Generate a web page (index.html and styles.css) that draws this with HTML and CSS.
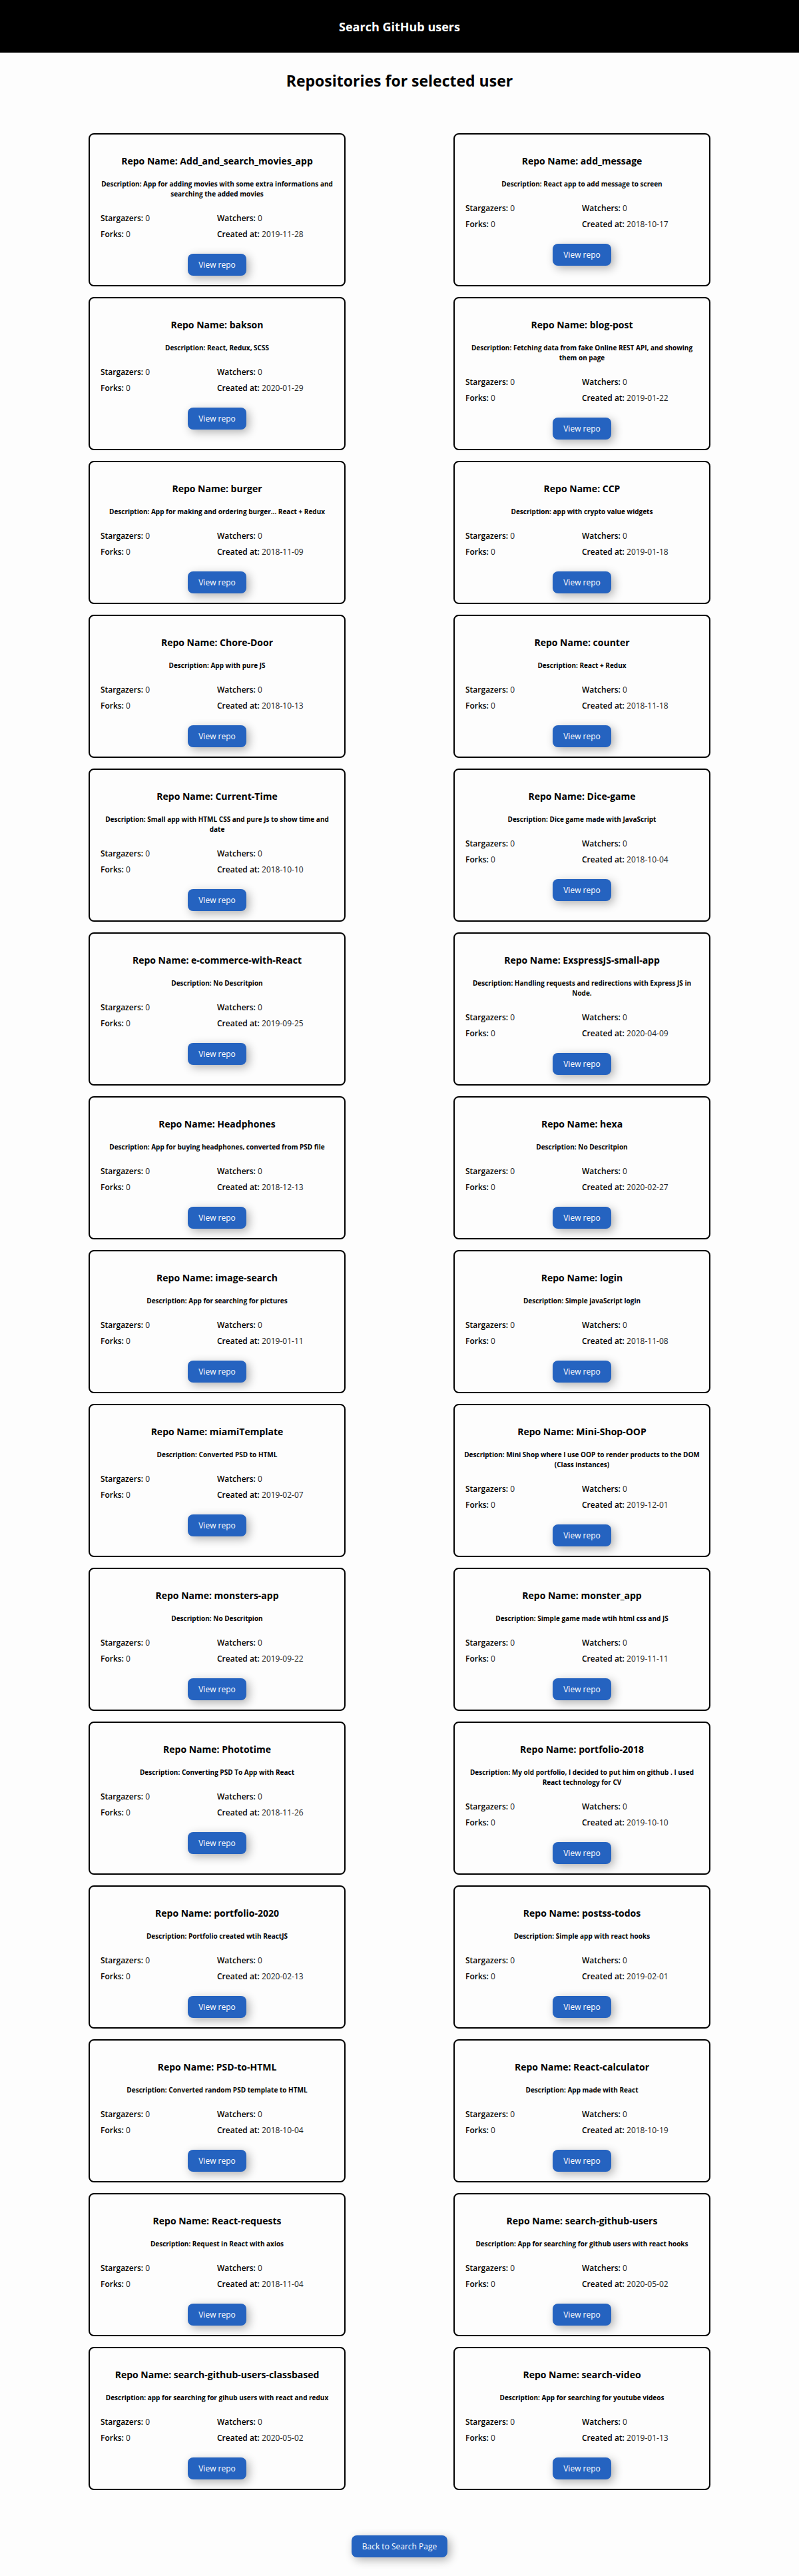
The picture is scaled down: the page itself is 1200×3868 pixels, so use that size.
FILE: index.html
```
<!DOCTYPE html>
<html lang="en">
<head>
<meta charset="utf-8">
<meta name="viewport" content="width=device-width, initial-scale=1">
<title>Search GitHub users</title>
<link rel="stylesheet" href="styles.css">
</head>
<body>
<header class="site-header"><h1 class="site-title">Search GitHub users</h1></header>
<main class="page">
<h2 class="page-title">Repositories for selected user</h2>
<div class="repos">
<article class="repo">
<h3 class="repo-name">Repo Name: Add_and_search_movies_app</h3>
<p class="repo-desc">Description: App for adding movies with some extra informations and searching the added movies</p>
<ul class="stats"><li><b>Stargazers:</b> 0</li><li><b>Watchers:</b> 0</li><li><b>Forks:</b> 0</li><li><b>Created at:</b> 2019-11-28</li></ul>
<a class="btn" href="#">View repo</a>
</article>
<article class="repo">
<h3 class="repo-name">Repo Name: add_message</h3>
<p class="repo-desc">Description: React app to add message to screen</p>
<ul class="stats"><li><b>Stargazers:</b> 0</li><li><b>Watchers:</b> 0</li><li><b>Forks:</b> 0</li><li><b>Created at:</b> 2018-10-17</li></ul>
<a class="btn" href="#">View repo</a>
</article>
<article class="repo">
<h3 class="repo-name">Repo Name: bakson</h3>
<p class="repo-desc">Description: React, Redux, SCSS</p>
<ul class="stats"><li><b>Stargazers:</b> 0</li><li><b>Watchers:</b> 0</li><li><b>Forks:</b> 0</li><li><b>Created at:</b> 2020-01-29</li></ul>
<a class="btn" href="#">View repo</a>
</article>
<article class="repo">
<h3 class="repo-name">Repo Name: blog-post</h3>
<p class="repo-desc">Description: Fetching data from fake Online REST API, and showing them on page</p>
<ul class="stats"><li><b>Stargazers:</b> 0</li><li><b>Watchers:</b> 0</li><li><b>Forks:</b> 0</li><li><b>Created at:</b> 2019-01-22</li></ul>
<a class="btn" href="#">View repo</a>
</article>
<article class="repo">
<h3 class="repo-name">Repo Name: burger</h3>
<p class="repo-desc">Description: App for making and ordering burger... React + Redux</p>
<ul class="stats"><li><b>Stargazers:</b> 0</li><li><b>Watchers:</b> 0</li><li><b>Forks:</b> 0</li><li><b>Created at:</b> 2018-11-09</li></ul>
<a class="btn" href="#">View repo</a>
</article>
<article class="repo">
<h3 class="repo-name">Repo Name: CCP</h3>
<p class="repo-desc">Description: app with crypto value widgets</p>
<ul class="stats"><li><b>Stargazers:</b> 0</li><li><b>Watchers:</b> 0</li><li><b>Forks:</b> 0</li><li><b>Created at:</b> 2019-01-18</li></ul>
<a class="btn" href="#">View repo</a>
</article>
<article class="repo">
<h3 class="repo-name">Repo Name: Chore-Door</h3>
<p class="repo-desc">Description: App with pure JS</p>
<ul class="stats"><li><b>Stargazers:</b> 0</li><li><b>Watchers:</b> 0</li><li><b>Forks:</b> 0</li><li><b>Created at:</b> 2018-10-13</li></ul>
<a class="btn" href="#">View repo</a>
</article>
<article class="repo">
<h3 class="repo-name">Repo Name: counter</h3>
<p class="repo-desc">Description: React + Redux</p>
<ul class="stats"><li><b>Stargazers:</b> 0</li><li><b>Watchers:</b> 0</li><li><b>Forks:</b> 0</li><li><b>Created at:</b> 2018-11-18</li></ul>
<a class="btn" href="#">View repo</a>
</article>
<article class="repo">
<h3 class="repo-name">Repo Name: Current-Time</h3>
<p class="repo-desc">Description: Small app with HTML CSS and pure Js to show time and date</p>
<ul class="stats"><li><b>Stargazers:</b> 0</li><li><b>Watchers:</b> 0</li><li><b>Forks:</b> 0</li><li><b>Created at:</b> 2018-10-10</li></ul>
<a class="btn" href="#">View repo</a>
</article>
<article class="repo">
<h3 class="repo-name">Repo Name: Dice-game</h3>
<p class="repo-desc">Description: Dice game made with JavaScript</p>
<ul class="stats"><li><b>Stargazers:</b> 0</li><li><b>Watchers:</b> 0</li><li><b>Forks:</b> 0</li><li><b>Created at:</b> 2018-10-04</li></ul>
<a class="btn" href="#">View repo</a>
</article>
<article class="repo">
<h3 class="repo-name">Repo Name: e-commerce-with-React</h3>
<p class="repo-desc">Description: No Descritpion</p>
<ul class="stats"><li><b>Stargazers:</b> 0</li><li><b>Watchers:</b> 0</li><li><b>Forks:</b> 0</li><li><b>Created at:</b> 2019-09-25</li></ul>
<a class="btn" href="#">View repo</a>
</article>
<article class="repo">
<h3 class="repo-name">Repo Name: ExspressJS-small-app</h3>
<p class="repo-desc">Description: Handling requests and redirections with Express JS in Node.</p>
<ul class="stats"><li><b>Stargazers:</b> 0</li><li><b>Watchers:</b> 0</li><li><b>Forks:</b> 0</li><li><b>Created at:</b> 2020-04-09</li></ul>
<a class="btn" href="#">View repo</a>
</article>
<article class="repo">
<h3 class="repo-name">Repo Name: Headphones</h3>
<p class="repo-desc">Description: App for buying headphones, converted from PSD file</p>
<ul class="stats"><li><b>Stargazers:</b> 0</li><li><b>Watchers:</b> 0</li><li><b>Forks:</b> 0</li><li><b>Created at:</b> 2018-12-13</li></ul>
<a class="btn" href="#">View repo</a>
</article>
<article class="repo">
<h3 class="repo-name">Repo Name: hexa</h3>
<p class="repo-desc">Description: No Descritpion</p>
<ul class="stats"><li><b>Stargazers:</b> 0</li><li><b>Watchers:</b> 0</li><li><b>Forks:</b> 0</li><li><b>Created at:</b> 2020-02-27</li></ul>
<a class="btn" href="#">View repo</a>
</article>
<article class="repo">
<h3 class="repo-name">Repo Name: image-search</h3>
<p class="repo-desc">Description: App for searching for pictures</p>
<ul class="stats"><li><b>Stargazers:</b> 0</li><li><b>Watchers:</b> 0</li><li><b>Forks:</b> 0</li><li><b>Created at:</b> 2019-01-11</li></ul>
<a class="btn" href="#">View repo</a>
</article>
<article class="repo">
<h3 class="repo-name">Repo Name: login</h3>
<p class="repo-desc">Description: Simple javaScript login</p>
<ul class="stats"><li><b>Stargazers:</b> 0</li><li><b>Watchers:</b> 0</li><li><b>Forks:</b> 0</li><li><b>Created at:</b> 2018-11-08</li></ul>
<a class="btn" href="#">View repo</a>
</article>
<article class="repo">
<h3 class="repo-name">Repo Name: miamiTemplate</h3>
<p class="repo-desc">Description: Converted PSD to HTML</p>
<ul class="stats"><li><b>Stargazers:</b> 0</li><li><b>Watchers:</b> 0</li><li><b>Forks:</b> 0</li><li><b>Created at:</b> 2019-02-07</li></ul>
<a class="btn" href="#">View repo</a>
</article>
<article class="repo">
<h3 class="repo-name">Repo Name: Mini-Shop-OOP</h3>
<p class="repo-desc">Description: Mini Shop where I use OOP to render products to the DOM (Class instances)</p>
<ul class="stats"><li><b>Stargazers:</b> 0</li><li><b>Watchers:</b> 0</li><li><b>Forks:</b> 0</li><li><b>Created at:</b> 2019-12-01</li></ul>
<a class="btn" href="#">View repo</a>
</article>
<article class="repo">
<h3 class="repo-name">Repo Name: monsters-app</h3>
<p class="repo-desc">Description: No Descritpion</p>
<ul class="stats"><li><b>Stargazers:</b> 0</li><li><b>Watchers:</b> 0</li><li><b>Forks:</b> 0</li><li><b>Created at:</b> 2019-09-22</li></ul>
<a class="btn" href="#">View repo</a>
</article>
<article class="repo">
<h3 class="repo-name">Repo Name: monster_app</h3>
<p class="repo-desc">Description: Simple game made wtih html css and JS</p>
<ul class="stats"><li><b>Stargazers:</b> 0</li><li><b>Watchers:</b> 0</li><li><b>Forks:</b> 0</li><li><b>Created at:</b> 2019-11-11</li></ul>
<a class="btn" href="#">View repo</a>
</article>
<article class="repo">
<h3 class="repo-name">Repo Name: Phototime</h3>
<p class="repo-desc">Description: Converting PSD To App with React</p>
<ul class="stats"><li><b>Stargazers:</b> 0</li><li><b>Watchers:</b> 0</li><li><b>Forks:</b> 0</li><li><b>Created at:</b> 2018-11-26</li></ul>
<a class="btn" href="#">View repo</a>
</article>
<article class="repo">
<h3 class="repo-name">Repo Name: portfolio-2018</h3>
<p class="repo-desc">Description: My old portfolio, I decided to put him on github . I used React technology for CV</p>
<ul class="stats"><li><b>Stargazers:</b> 0</li><li><b>Watchers:</b> 0</li><li><b>Forks:</b> 0</li><li><b>Created at:</b> 2019-10-10</li></ul>
<a class="btn" href="#">View repo</a>
</article>
<article class="repo">
<h3 class="repo-name">Repo Name: portfolio-2020</h3>
<p class="repo-desc">Description: Portfolio created wtih ReactJS</p>
<ul class="stats"><li><b>Stargazers:</b> 0</li><li><b>Watchers:</b> 0</li><li><b>Forks:</b> 0</li><li><b>Created at:</b> 2020-02-13</li></ul>
<a class="btn" href="#">View repo</a>
</article>
<article class="repo">
<h3 class="repo-name">Repo Name: postss-todos</h3>
<p class="repo-desc">Description: Simple app with react hooks</p>
<ul class="stats"><li><b>Stargazers:</b> 0</li><li><b>Watchers:</b> 0</li><li><b>Forks:</b> 0</li><li><b>Created at:</b> 2019-02-01</li></ul>
<a class="btn" href="#">View repo</a>
</article>
<article class="repo">
<h3 class="repo-name">Repo Name: PSD-to-HTML</h3>
<p class="repo-desc">Description: Converted random PSD template to HTML</p>
<ul class="stats"><li><b>Stargazers:</b> 0</li><li><b>Watchers:</b> 0</li><li><b>Forks:</b> 0</li><li><b>Created at:</b> 2018-10-04</li></ul>
<a class="btn" href="#">View repo</a>
</article>
<article class="repo">
<h3 class="repo-name">Repo Name: React-calculator</h3>
<p class="repo-desc">Description: App made with React</p>
<ul class="stats"><li><b>Stargazers:</b> 0</li><li><b>Watchers:</b> 0</li><li><b>Forks:</b> 0</li><li><b>Created at:</b> 2018-10-19</li></ul>
<a class="btn" href="#">View repo</a>
</article>
<article class="repo">
<h3 class="repo-name">Repo Name: React-requests</h3>
<p class="repo-desc">Description: Request in React with axios</p>
<ul class="stats"><li><b>Stargazers:</b> 0</li><li><b>Watchers:</b> 0</li><li><b>Forks:</b> 0</li><li><b>Created at:</b> 2018-11-04</li></ul>
<a class="btn" href="#">View repo</a>
</article>
<article class="repo">
<h3 class="repo-name">Repo Name: search-github-users</h3>
<p class="repo-desc">Description: App for searching for github users with react hooks</p>
<ul class="stats"><li><b>Stargazers:</b> 0</li><li><b>Watchers:</b> 0</li><li><b>Forks:</b> 0</li><li><b>Created at:</b> 2020-05-02</li></ul>
<a class="btn" href="#">View repo</a>
</article>
<article class="repo">
<h3 class="repo-name">Repo Name: search-github-users-classbased</h3>
<p class="repo-desc">Description: app for searching for gihub users with react and redux</p>
<ul class="stats"><li><b>Stargazers:</b> 0</li><li><b>Watchers:</b> 0</li><li><b>Forks:</b> 0</li><li><b>Created at:</b> 2020-05-02</li></ul>
<a class="btn" href="#">View repo</a>
</article>
<article class="repo">
<h3 class="repo-name">Repo Name: search-video</h3>
<p class="repo-desc">Description: App for searching for youtube videos</p>
<ul class="stats"><li><b>Stargazers:</b> 0</li><li><b>Watchers:</b> 0</li><li><b>Forks:</b> 0</li><li><b>Created at:</b> 2019-01-13</li></ul>
<a class="btn" href="#">View repo</a>
</article>
</div>
<a class="btn" href="#">Back to Search Page</a>
</main>
</body>
</html>
```
FILE: styles.css
```
* {
  box-sizing: border-box;
  margin: 0;
  padding: 0;
}

body {
  background: #fdfdfd;
  color: #000;
  font-family: "Open Sans", "Noto Sans", sans-serif;
  font-size: 12px;
  line-height: 16px;
}

.site-header {
  padding: 28px 16px 27px;
  background: #000;
  color: #fff;
  text-align: center;
}

.site-title {
  font-size: 18px;
  font-weight: 700;
  line-height: 24px;
}

.page {
  display: flex;
  flex-direction: column;
  align-items: center;
  padding: 26px 133px 28px;
}

.page-title {
  font-size: 23px;
  font-weight: 700;
  line-height: 32px;
}

.repos {
  display: grid;
  grid-template-columns: 1fr 1fr;
  gap: 16px 162px;
  width: 100%;
  margin: 63px 0 68px;
}

.repo {
  display: flex;
  flex-direction: column;
  align-items: center;
  padding: 30px 14px 14px;
  border: 2px solid #000;
  border-radius: 8px;
}

.repo-name {
  font-size: 14px;
  font-weight: 700;
  line-height: 20px;
  text-align: center;
}

.repo-desc {
  margin: 17px 0 21px;
  font-size: 10px;
  font-weight: 700;
  line-height: 15px;
  text-align: center;
}

.stats {
  display: grid;
  grid-template-columns: 1fr 1fr;
  row-gap: 8px;
  width: 100%;
  margin-bottom: 21px;
  padding: 0 2px;
  list-style: none;
  color: #222;
}

.stats b {
  color: #000;
  font-weight: 600;
}

.btn {
  padding: 9px 16px 8px;
  border-radius: 8px;
  background: #2563c0;
  box-shadow: 4px 4px 14px rgba(0, 0, 0, 0.3);
  color: #fff;
  text-decoration: none;
}
```
